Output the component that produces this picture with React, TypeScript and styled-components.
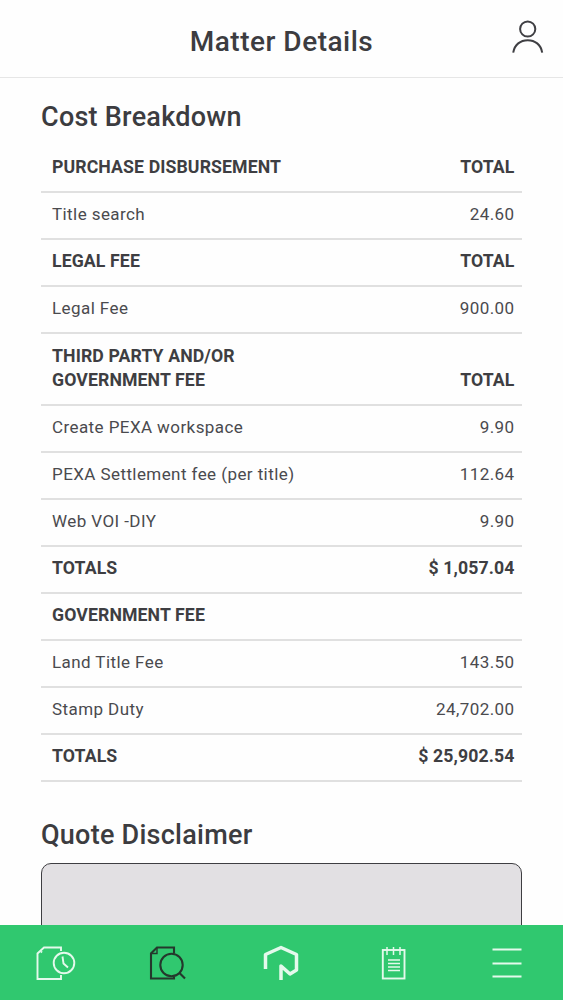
import React from "react";
import styled, { createGlobalStyle } from "styled-components";

const Global = createGlobalStyle`
  html, body { margin: 0; padding: 0; background: #fefefe; }
  body { font-family: Roboto, "Liberation Sans", sans-serif; color: #3c3c40; }
`;
const Screen = styled.div`
  width: 563px; height: 1000px; display: flex; flex-direction: column; overflow: hidden; background: #fefefe;
`;
const Header = styled.header`
  flex: 0 0 78px; box-sizing: border-box; border-bottom: 1px solid #e6e6e6; display: flex; align-items: center; justify-content: center; position: relative;
`;
const Title = styled.h1`
  margin: 0; font-size: 28px; font-weight: 500; letter-spacing: 0.5px; color: #3c3c40; position: relative; top: 3px;
`;
const UserButton = styled.div`
  position: absolute; right: 19px; top: 19px; width: 32px; height: 36px; display: flex;
`;
const Content = styled.main`
  flex: 1 1 auto; min-height: 0; overflow: hidden; padding: 0 41px;
`;
const SectionTitle = styled.h2`
  margin: 0; font-size: 27px; font-weight: 500; line-height: 32px; letter-spacing: 0.25px; color: #3c3c40;
`;
const CostTitle = styled(SectionTitle)`
  padding-top: 23px; height: 45px;
`;
const QuoteTitle = styled(SectionTitle)`
  padding-top: 37px; height: 44px;
`;
const Table = styled.div`display: flex; flex-direction: column;`;
const Row = styled.div<{ $tall?: boolean }>`
  box-sizing: border-box; height: ${p => (p.$tall ? 72 : 47)}px; border-bottom: 2px solid #e0e0e0;
  display: flex; justify-content: space-between; align-items: flex-end; padding: 0 7.5px 12px 11px;
  line-height: 24px;
`;
const Cell = styled.span<{ $bold?: boolean }>`
  font-size: ${p => (p.$bold ? 17.7 : 17)}px; letter-spacing: ${p => (p.$bold ? 0.1 : 0.42)}px; font-weight: ${p => (p.$bold ? 700 : 400)};
  color: ${p => (p.$bold ? "#3e3e42" : "#4a4a4e")};
`;
const Disclaimer = styled.div`
  box-sizing: border-box; height: 120px; border: 1.5px solid #3e3e42; border-radius: 10px; background: #e2e0e3;
`;
const Nav = styled.nav`
  flex: 0 0 75px; background: #30c86f; display: grid; grid-template-columns: repeat(5, 1fr); align-items: center; justify-items: center;
`;
const NavSlot = styled.div`
  width: 50px; height: 50px; display: flex; align-items: center; justify-content: center;
`;

const W = "#e4f9ec";
const D = "#24382c";

const UserIcon = () => (
  <svg width="32" height="36" viewBox="0 0 32 36" fill="none" stroke="#3f3f43" strokeWidth="2">
    <circle cx="15.7" cy="10" r="7.6" />
    <path d="M1.2 33.7C2.5 25.5 8.5 21.2 15.7 21.2S29 25.5 30.2 33.7" />
  </svg>
);
const ClockDocIcon = () => (
  <svg width="40" height="36" viewBox="0 0 40 36" fill="none" stroke={W} strokeWidth="1.9">
    <path d="M25 6V2.5H8L1.5 8.5V34H25V30" />
    <path d="M5 6.5L6 7.5" strokeWidth="1.8" />
    <circle cx="28" cy="18" r="10.3" />
    <path d="M26.5 11.5L27.5 18.5L32 22.5" />
  </svg>
);
const SearchDocIcon = () => (
  <svg width="40" height="36" viewBox="0 0 40 36" fill="none" stroke={D} strokeWidth="2.1">
    <path d="M25 8.5V2.5H8L2 8.5V33.5H25V31.5" />
    <path d="M8 3V8.5H2.5" strokeWidth="1.4" />
    <circle cx="22.5" cy="20" r="11.2" />
    <path d="M30.5 28L36 33.5" />
  </svg>
);
const LogoIcon = () => (
  <svg width="36" height="36" viewBox="0 0 36 36" fill="none" stroke={W} strokeWidth="3.5" strokeLinejoin="round">
    <path d="M2.5 24V9.5L18 2.5L33.5 9.5V25L27 29L18 21V35" />
  </svg>
);
const NotesIcon = () => (
  <svg width="26" height="36" viewBox="0 0 26 36" fill="none" stroke={W} strokeWidth="1.9">
    <rect x="1.8" y="5" width="21.7" height="28.5" />
    <path d="M6 2V10M12.5 2V10M19 2V10" strokeWidth="1.5" />
    <path d="M7 15H19M7 18.5H19M7 22H19M7 25.5H19" strokeWidth="1.5" />
  </svg>
);
const MenuIcon = () => (
  <svg width="30" height="30" viewBox="0 0 30 30" fill="none" stroke={W} strokeWidth="2">
    <path d="M0.5 1.5H29.5M0.5 15.5H29.5M0.5 28.5H29.5" />
  </svg>
);

const rows: { l: React.ReactNode; r?: string; b?: boolean; tall?: boolean }[] = [
  { l: "PURCHASE DISBURSEMENT", r: "TOTAL", b: true },
  { l: "Title search", r: "24.60" },
  { l: "LEGAL FEE", r: "TOTAL", b: true },
  { l: "Legal Fee", r: "900.00" },
  { l: <>THIRD PARTY AND/OR<br />GOVERNMENT FEE</>, r: "TOTAL", b: true, tall: true },
  { l: "Create PEXA workspace", r: "9.90" },
  { l: "PEXA Settlement fee (per title)", r: "112.64" },
  { l: "Web VOI -DIY", r: "9.90" },
  { l: "TOTALS", r: "$ 1,057.04", b: true },
  { l: "GOVERNMENT FEE", b: true },
  { l: "Land Title Fee", r: "143.50" },
  { l: "Stamp Duty", r: "24,702.00" },
  { l: "TOTALS", r: "$ 25,902.54", b: true },
];

export default function App() {
  return (
    <Screen>
      <Global />
      <Header>
        <Title>Matter Details</Title>
        <UserButton><UserIcon /></UserButton>
      </Header>
      <Content>
        <CostTitle>Cost Breakdown</CostTitle>
        <Table>
          {rows.map((r, i) => (
            <Row key={i} $tall={r.tall}>
              <Cell $bold={r.b}>{r.l}</Cell>
              {r.r && <Cell $bold={r.b}>{r.r}</Cell>}
            </Row>
          ))}
        </Table>
        <QuoteTitle>Quote Disclaimer</QuoteTitle>
        <Disclaimer />
      </Content>
      <Nav>
        <NavSlot><ClockDocIcon /></NavSlot>
        <NavSlot><SearchDocIcon /></NavSlot>
        <NavSlot><LogoIcon /></NavSlot>
        <NavSlot><NotesIcon /></NavSlot>
        <NavSlot><MenuIcon /></NavSlot>
      </Nav>
    </Screen>
  );
}
